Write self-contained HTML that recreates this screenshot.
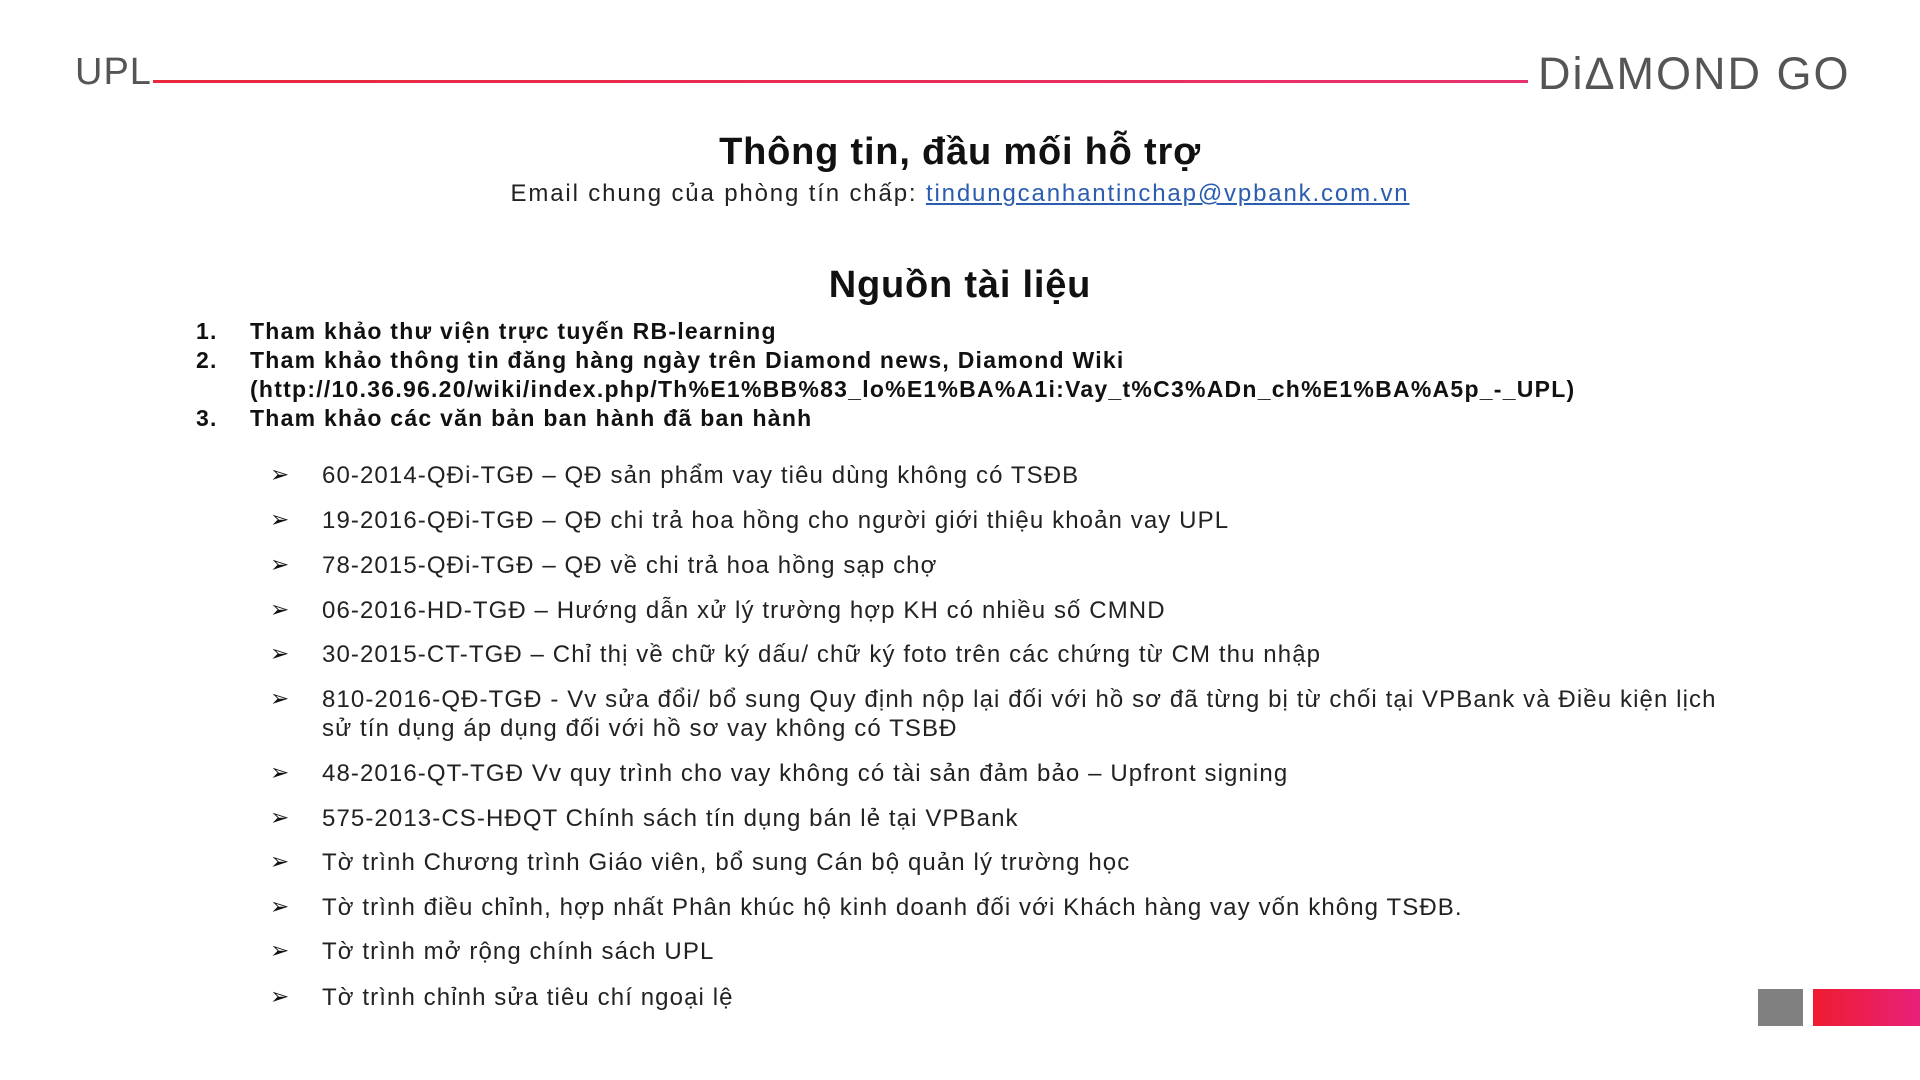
<!DOCTYPE html>
<html><head><meta charset="utf-8"><style>
body{margin:0;width:1920px;height:1080px;background:#fff;position:relative;overflow:hidden;font-family:"Liberation Sans","DejaVu Sans",sans-serif;color:#1a1a1a}
.a{position:absolute;white-space:nowrap}
.n{font-weight:bold;font-size:23px;letter-spacing:1.25px;color:#111}
.b{font-size:24px;letter-spacing:1.1px;color:#222}
.ar{font-size:23px;color:#111;font-weight:bold}
</style></head><body>
<div class="a" style="left:75px;top:51px;font-size:38px;color:#555;letter-spacing:1px">UPL</div>
<div class="a" style="left:153px;top:80px;width:1375px;height:3px;background:linear-gradient(90deg,#e8283c,#e8306e)"></div>
<div class="a" style="left:1538px;top:48px;font-size:45px;color:#555;letter-spacing:2px">DiΔMOND GO</div>
<div class="a" style="left:0;width:1920px;text-align:center;top:131px;font-size:38px;letter-spacing:0.8px;font-weight:bold;color:#111">Thông tin, đầu mối hỗ trợ</div>
<div class="a" style="left:0;width:1920px;text-align:center;top:180px;font-size:24px;letter-spacing:1.85px;color:#222">Email chung của phòng tín chấp: <span style="color:#2a5db0;text-decoration:underline">tindungcanhantinchap@vpbank.com.vn</span></div>
<div class="a" style="left:0;width:1920px;text-align:center;top:264px;font-size:38px;letter-spacing:0.8px;font-weight:bold;color:#111">Nguồn tài liệu</div>
<div class="a n" style="left:196px;top:318px">1.</div><div class="a n" style="left:250px;top:318px">Tham khảo thư viện trực tuyến RB-learning</div>
<div class="a n" style="left:196px;top:347px">2.</div><div class="a n" style="left:250px;top:347px">Tham khảo thông tin đăng hàng ngày trên Diamond news, Diamond Wiki</div>
<div class="a n" style="left:250px;top:376px">(http://10.36.96.20/wiki/index.php/Th%E1%BB%83_lo%E1%BA%A1i:Vay_t%C3%ADn_ch%E1%BA%A5p_-_UPL)</div>
<div class="a n" style="left:196px;top:405px">3.</div><div class="a n" style="left:250px;top:405px">Tham khảo các văn bản ban hành đã ban hành</div>

<div class="a ar" style="left:270px;top:461px">➢</div><div class="a b" style="left:322px;top:462px">60-2014-QĐi-TGĐ – QĐ sản phẩm vay tiêu dùng không có TSĐB</div>
<div class="a ar" style="left:270px;top:506px">➢</div><div class="a b" style="left:322px;top:507px">19-2016-QĐi-TGĐ – QĐ chi trả hoa hồng cho người giới thiệu khoản vay UPL</div>
<div class="a ar" style="left:270px;top:551px">➢</div><div class="a b" style="left:322px;top:552px">78-2015-QĐi-TGĐ – QĐ về chi trả hoa hồng sạp chợ</div>
<div class="a ar" style="left:270px;top:596px">➢</div><div class="a b" style="left:322px;top:597px">06-2016-HD-TGĐ – Hướng dẫn xử lý trường hợp KH có nhiều số CMND</div>
<div class="a ar" style="left:270px;top:640px">➢</div><div class="a b" style="left:322px;top:641px">30-2015-CT-TGĐ – Chỉ thị về chữ ký dấu/ chữ ký foto trên các chứng từ CM thu nhập</div>
<div class="a ar" style="left:270px;top:685px">➢</div><div class="a b" style="left:322px;top:686px">810-2016-QĐ-TGĐ - Vv sửa đổi/ bổ sung Quy định nộp lại đối với hồ sơ đã từng bị từ chối tại VPBank và Điều kiện lịch</div>
<div class="a b" style="left:322px;top:715px">sử tín dụng áp dụng đối với hồ sơ vay không có TSBĐ</div>
<div class="a ar" style="left:270px;top:759px">➢</div><div class="a b" style="left:322px;top:760px">48-2016-QT-TGĐ Vv quy trình cho vay không có tài sản đảm bảo – Upfront signing</div>
<div class="a ar" style="left:270px;top:804px">➢</div><div class="a b" style="left:322px;top:805px">575-2013-CS-HĐQT Chính sách tín dụng bán lẻ tại VPBank</div>
<div class="a ar" style="left:270px;top:848px">➢</div><div class="a b" style="left:322px;top:849px">Tờ trình Chương trình Giáo viên, bổ sung Cán bộ quản lý trường học</div>
<div class="a ar" style="left:270px;top:893px">➢</div><div class="a b" style="left:322px;top:894px">Tờ trình điều chỉnh, hợp nhất Phân khúc hộ kinh doanh đối với Khách hàng vay vốn không TSĐB.</div>
<div class="a ar" style="left:270px;top:937px">➢</div><div class="a b" style="left:322px;top:938px">Tờ trình mở rộng chính sách UPL</div>
<div class="a ar" style="left:270px;top:983px">➢</div><div class="a b" style="left:322px;top:984px">Tờ trình chỉnh sửa tiêu chí ngoại lệ</div>

<div class="a" style="left:1758px;top:989px;width:45px;height:37px;background:#808080"></div>
<div class="a" style="left:1813px;top:989px;width:107px;height:37px;background:linear-gradient(90deg,#ee1c30,#e8207a)"></div>
</body></html>
